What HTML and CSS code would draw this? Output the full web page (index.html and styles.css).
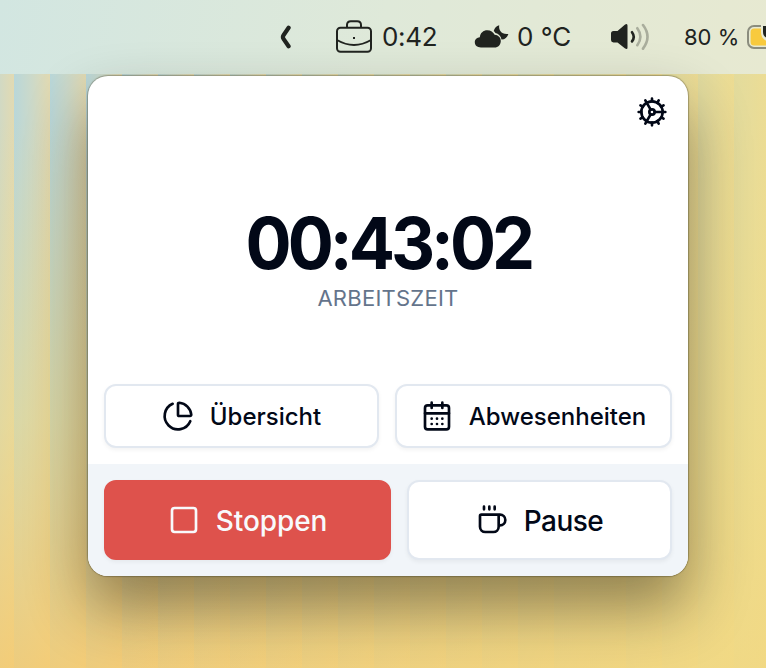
FILE: index.html
```
<!DOCTYPE html>
<html lang="de">
<head>
<meta charset="utf-8">
<title>Arbeitszeit</title>
<link rel="stylesheet" href="styles.css">
</head>
<body>
<div class="desktop">
  <header class="menubar">
    <svg class="chevron" width="12" height="24" viewBox="0 0 12 24"><path d="M9.600 2.700 4.500 10.200Q3.300 12 4.500 13.800L9.600 21.300" /></svg>
    <div class="status work">
      <svg width="38" height="36" viewBox="0 0 38 36"><g class="line"><rect x="2" y="8.700" width="34" height="24" rx="3.500"/><path d="M12 8.500V6q0-3.800 3.800-3.800h6.400Q26 2.200 26 6v2.500M2 21q17 10 34 0"/></g><rect x="18" y="18" width="2" height="2"/></svg>
      <span>0:42</span>
    </div>
    <div class="status weather">
      <svg width="36" height="26" viewBox="0 0 36 26"><path d="M7 23.500C3 23.500.8 21.200.8 18.300c0-2.900 2.200-4.900 5-5.100C6.300 9 9.300 6.300 13.300 6.300c3.400 0 6 1.800 7.300 4.500 3.600.2 6.200 2.800 6.200 6.200 0 3.800-2.600 6.500-6.300 6.500z"/><path d="M25.200 1.200c-.7 4.800 2.200 9.600 9.200 8.700-1.100 3.500-3.600 5.700-6.900 5.600-.7-3.600-2.900-5.800-6.100-6.500-.6-.9-1.100-1.400-1.700-1.900.8-3.100 2.700-5.200 5.500-5.900z"/></svg>
      <span>0 °C</span>
    </div>
    <svg class="speaker" width="40" height="28" viewBox="0 0 40 28"><path d="M1 10.500Q1 8 3.500 8H7.500L14.800 1.700Q17.500 0 17.500 2.600V24.600Q17.500 27.200 14.800 25.300L7.500 19.400H3.500Q1 19.400 1 17z"/><g class="wave"><path d="M22 9.200q3.500 4.600 0 9.200"/><path class="faint" d="M27.300 5.200q6.200 8.500 0 17M33 2q9 11.800 0 23.600"/></g></svg>
    <div class="status battery">
      <span>80 %</span>
      <svg width="50" height="26" viewBox="0 0 50 26"><rect class="shell" x="1" y="2" width="47" height="22" rx="6"/><rect class="charge" x="3.600" y="4.600" width="33" height="16.800" rx="3.500"/><path class="halo" d="M16 2v6q0 7 8 8V2z"/><path d="M16 2v6q0 6 8 7V2z"/></svg>
    </div>
  </header>
  <main class="panel">
    <section class="clock">
      <svg class="icon settings" viewBox="0 0 24 24"><path d="M12 20a8 8 0 1 0 0-16 8 8 0 0 0 0 16Z"/><path d="M12 14a2 2 0 1 0 0-4 2 2 0 0 0 0 4Z"/><path d="M12 2v2M12 22v-2M17 20.660l-1-1.730M11 10.270 7 3.340M20.660 17l-1.730-1M3.340 7l1.730 1M14 12h8M2 12h2M20.660 7l-1.730 1M3.340 17l1.730-1M17 3.340l-1 1.730M11 13.730l-4 6.930"/></svg>
      <div class="time">00:43:02</div>
      <div class="caption">ARBEITSZEIT</div>
      <nav class="links">
        <button class="button"><svg class="icon" viewBox="0 0 24 24"><path d="M21 12c.552 0 1.005-.449.950-.998a10 10 0 0 0-8.953-8.951c-.550-.055-.998.398-.998.950v8a1 1 0 0 0 1 1z"/><path d="M21.210 15.890A10 10 0 1 1 8 2.830"/></svg><span>Übersicht</span></button>
        <button class="button"><svg class="icon" viewBox="0 0 24 24"><path d="M8 2v4M16 2v4"/><rect width="18" height="18" x="3" y="4" rx="2"/><path d="M3 10h18M8 14h.010M12 14h.010M16 14h.010M8 18h.010M12 18h.010M16 18h.010"/></svg><span>Abwesenheiten</span></button>
      </nav>
    </section>
    <footer class="actions">
      <button class="button stop"><svg class="icon" viewBox="0 0 24 24"><rect width="18" height="18" x="3" y="3" rx="2"/></svg><span>Stoppen</span></button>
      <button class="button pause"><svg class="icon" viewBox="0 0 24 24"><path d="M6 2v2M10 2v2M14 2v2M16 8a1 1 0 0 1 1 1v8a4 4 0 0 1-4 4H7a4 4 0 0 1-4-4V9a1 1 0 0 1 1-1h14a4 4 0 1 1 0 8h-1"/></svg><span>Pause</span></button>
    </footer>
  </main>
</div>
</body>
</html>
```
FILE: styles.css
```
* { box-sizing: border-box; }
body { margin: 0; font-family: Inter, "Liberation Sans", sans-serif; color: #020817; }
.desktop {
  width: 766px;
  height: 668px;
  overflow: hidden;
  background:
    linear-gradient(90deg, transparent 0 15%, rgba(241, 221, 136, .74) 95%),
    linear-gradient(180deg, transparent 120px, rgba(240, 216, 130, .55) 420px, rgba(247, 202, 108, .84) 668px),
    repeating-linear-gradient(90deg, #b9d7d9 14px, #cbd9ca 31px, #e2dab2 50px);
}
.menubar {
  height: 74px;
  display: flex;
  align-items: center;
  padding-left: 279px;
  background: linear-gradient(100deg, #d2e6e1 0%, #dfe9d9 50%, #e7e9d1 100%);
  color: #20231f;
  white-space: nowrap;
}
.menubar svg { display: block; flex: none; fill: currentColor; }
.menubar .chevron { fill: none; stroke: currentColor; stroke-width: 4.200; stroke-linecap: round; }
.line { fill: none; stroke: currentColor; stroke-width: 2; }
.status { display: flex; align-items: center; flex: none; font-size: 26px; line-height: 32px; }
.work { width: 139px; margin-left: 44px; gap: 9px; }
.work svg { margin-top: -1px; }
.work span { letter-spacing: -.3px; }
.weather { width: 136px; gap: 7px; }
.speaker { margin-right: 34px; }
.wave { fill: none; stroke: currentColor; stroke-width: 2.600; stroke-linecap: round; }
.faint { opacity: .3; }
.battery { gap: 8px; font-size: 22px; }
.menubar .shell { fill: none; stroke: #8b8d7e; stroke-width: 2; }
.menubar .charge { fill: #f8ca3e; }
.menubar .halo { fill: none; stroke: #e8ead5; stroke-width: 4; }
.panel {
  width: 600px;
  height: 500px;
  margin: 2px 0 0 88px;
  border-radius: 20px;
  overflow: hidden;
  background: #fff;
  box-shadow: 0 0 1px 1px rgba(60, 55, 30, .35), 0 32px 60px rgba(35, 28, 15, .46);
}
.clock { height: 388px; padding: 20px 16px 16px; display: flex; flex-direction: column; align-items: center; }
.icon { width: 32px; height: 32px; flex: none; fill: none; stroke: currentColor; stroke-width: 2; stroke-linecap: round; stroke-linejoin: round; }
.settings { align-self: flex-end; margin-right: 4px; }
.time {
  margin-top: 79px;
  font-size: 72px;
  line-height: 72px;
  font-weight: 700;
  letter-spacing: -4.200px;
  font-feature-settings: "calt" 0;
  transform: scaleX(.95);
}
.caption { margin-top: 3px; font-size: 22px; line-height: 32px; letter-spacing: .25px; color: #64748b; }
.links { width: 100%; margin-top: auto; display: grid; grid-template-columns: 275px 277px; gap: 16px; }
.button {
  height: 64px;
  padding: 0;
  display: flex;
  align-items: center;
  justify-content: center;
  gap: 16px;
  border: 2px solid #e2e8f0;
  border-radius: 12px;
  background: #fff;
  color: inherit;
  font: 500 24px/32px Inter, "Liberation Sans", sans-serif;
  letter-spacing: 0;
  box-shadow: 0 2px 4px rgba(0, 0, 0, .05);
}
.button span { padding-top: 1px; }
.actions { height: 112px; padding: 16px; display: grid; grid-template-columns: 287px 265px; gap: 16px; background: #f1f5f9; }
.actions .button { height: 80px; font-size: 28px; letter-spacing: -.1px; gap: 16px; }
.actions .pause { letter-spacing: -.5px; }
.actions .stop { border-color: #de524c; background: #de524c; color: #f8fafc; }
```
